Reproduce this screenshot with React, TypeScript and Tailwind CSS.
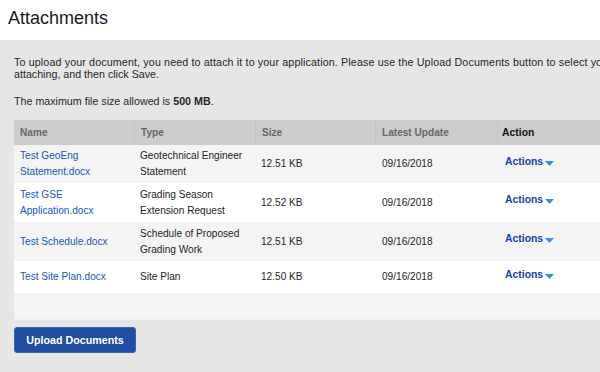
const rows = [
  {
    name: ["Test GeoEng", "Statement.docx"],
    type: ["Geotechnical Engineer", "Statement"],
    size: "12.51 KB",
    date: "09/16/2018",
    bg: "bg-[#f4f4f4]",
    h: "h-[38px]",
  },
  {
    name: ["Test GSE", "Application.docx"],
    type: ["Grading Season", "Extension Request"],
    size: "12.52 KB",
    date: "09/16/2018",
    bg: "bg-white",
    h: "h-[39px]",
  },
  {
    name: ["Test Schedule.docx"],
    type: ["Schedule of Proposed", "Grading Work"],
    size: "12.51 KB",
    date: "09/16/2018",
    bg: "bg-[#f4f4f4]",
    h: "h-[39px]",
  },
  {
    name: ["Test Site Plan.docx"],
    type: ["Site Plan"],
    size: "12.50 KB",
    date: "09/16/2018",
    bg: "bg-white",
    h: "h-[32px]",
  },
];

const Lines = ({ lines }: { lines: string[] }) => (
  <span>
    {lines.map((l, i) => (
      <span key={i} className="block whitespace-nowrap">
        {l}
      </span>
    ))}
  </span>
);

const App = () => {
  return (
    <div className="w-[600px] h-[372px] overflow-hidden bg-white font-['Liberation_Sans',Arial,sans-serif] text-[#222]">
      <header className="h-[40px] pl-[8px] pt-[6px]">
        <h1 className="text-[18px] leading-[24px] text-[#1a1a1a]">Attachments</h1>
      </header>

      <div className="h-[332px] bg-[#e6e6e6] pl-[14px] pt-[16px]">
        <p className="text-[10.7px] leading-[12px] text-[#262626]">
          <span className="block whitespace-nowrap tracking-[0.135px]">
            To upload your document, you need to attach it to your application. Please use the Upload Documents button to select your
          </span>
          <span className="block whitespace-nowrap">attaching, and then click Save.</span>
        </p>
        <p className="mt-[15px] text-[10.7px] leading-[12px] text-[#262626] whitespace-nowrap">
          The maximum file size allowed is <b>500 MB</b>.
        </p>

        <div className="mt-[13px] w-[640px] text-[10.1px] leading-[16px]">
          <div className="grid h-[25px] grid-cols-[121px_121px_120px_122px_1fr] bg-[#cccccc] font-bold text-[#676767]">
            <div className="flex items-center border-r border-[#c3c3c3] pl-[6px]">Name</div>
            <div className="flex items-center border-r border-[#c3c3c3] pl-[6px]">Type</div>
            <div className="flex items-center border-r border-[#c3c3c3] pl-[6px]">Size</div>
            <div className="flex items-center border-r border-[#c3c3c3] pl-[6px]">Latest Update</div>
            <div className="flex items-center pl-[4px] text-[10.4px] text-[#111]">Action</div>
          </div>

          {rows.map((r, i) => (
            <div
              key={i}
              className={`grid grid-cols-[121px_121px_120px_122px_1fr] ${r.bg} ${r.h}`}
            >
              <div className="flex items-center pl-[6px] text-[#2157bd]">
                <Lines lines={r.name} />
              </div>
              <div className="flex items-center pl-[5px] text-[#1e1e1e]">
                <Lines lines={r.type} />
              </div>
              <div className="flex items-center pl-[5px] text-[#262626]">{r.size}</div>
              <div className="flex items-center pl-[6px] text-[#262626]">{r.date}</div>
              <div className="flex items-center pb-[5px] pl-[7px]">
                <span className="text-[10.4px] font-bold text-[#1c3fae]">Actions</span>
                <svg width="9" height="5" viewBox="0 0 9 5" className="ml-[2px] mt-[3px]">
                  <path d="M0 0H9L4.5 5Z" fill="#3b8fe0" />
                </svg>
              </div>
            </div>
          ))}

          <div className="h-[26px] bg-[#f4f4f4]" />
          <div className="h-px bg-[#eeeeee]" />
        </div>

        <button className="mt-[7px] flex h-[26px] w-[122px] items-center justify-center rounded-[3px] border border-[#3c64b0] bg-[#1f4ea3] text-[10.7px] font-bold text-white">
          Upload Documents
        </button>
      </div>
    </div>
  );
};

export default App;
